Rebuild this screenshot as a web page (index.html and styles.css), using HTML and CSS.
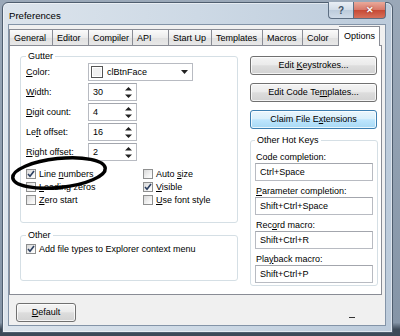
FILE: index.html
```html
<!DOCTYPE html>
<html>
<head>
<meta charset="utf-8">
<link rel="stylesheet" href="styles.css">
</head>
<body>
<div class="screen">
  <div class="window">
    <div class="titlebar">
      <span class="title">Preferences</span>
      <div class="caption">
        <div class="cbtn help">?</div>
        <div class="cbtn close">&#x2715;</div>
      </div>
    </div>
    <div class="client">
      <div class="tabs">
        <div class="tab">General</div>
        <div class="tab">Editor</div>
        <div class="tab">Compiler</div>
        <div class="tab">API</div>
        <div class="tab">Start Up</div>
        <div class="tab">Templates</div>
        <div class="tab">Macros</div>
        <div class="tab last">Color</div>
        <div class="tab sel">Options</div>
      </div>
      <div class="panel">
        <div class="left">
          <fieldset class="group gutter">
            <legend>Gutter</legend>
            <div class="fields">
              <span><u>C</u>olor:</span>
              <div class="combo"><span class="swatch"></span><span class="ctext">clBtnFace</span><svg class="darrow" width="7" height="4" viewBox="0 0 7 4"><path d="M0 0h7L3.5 4z" fill="#222"/></svg></div>
              <span><u>W</u>idth:</span>
              <div class="edit spin">30<svg class="arrows" width="7" height="11" viewBox="0 0 7 11"><path d="M3.5 0L7 3.5H0z M0 7.5h7L3.5 11z" fill="#222"/></svg></div>
              <span><u>D</u>igit count:</span>
              <div class="edit spin">4<svg class="arrows" width="7" height="11" viewBox="0 0 7 11"><path d="M3.5 0L7 3.5H0z M0 7.5h7L3.5 11z" fill="#222"/></svg></div>
              <span>Le<u>f</u>t offset:</span>
              <div class="edit spin">16<svg class="arrows" width="7" height="11" viewBox="0 0 7 11"><path d="M3.5 0L7 3.5H0z M0 7.5h7L3.5 11z" fill="#222"/></svg></div>
              <span><u>R</u>ight offset:</span>
              <div class="edit spin">2<svg class="arrows" width="7" height="11" viewBox="0 0 7 11"><path d="M3.5 0L7 3.5H0z M0 7.5h7L3.5 11z" fill="#222"/></svg></div>
            </div>
            <div class="checks">
              <label class="chk"><span class="cb on"><svg width="8" height="8" viewBox="0 0 8 8"><path d="M1 4l2 2.2L7 1" fill="none" stroke="#2b3f61" stroke-width="1.6"/></svg></span><span>Line <u>n</u>umbers</span></label>
              <label class="chk"><span class="cb"></span><span>Auto <u>s</u>ize</span></label>
              <label class="chk"><span class="cb"></span><span><u>L</u>eading zeros</span></label>
              <label class="chk"><span class="cb on"><svg width="8" height="8" viewBox="0 0 8 8"><path d="M1 4l2 2.2L7 1" fill="none" stroke="#2b3f61" stroke-width="1.6"/></svg></span><span><u>V</u>isible</span></label>
              <label class="chk"><span class="cb"></span><span><u>Z</u>ero start</span></label>
              <label class="chk"><span class="cb"></span><span><u>U</u>se font style</span></label>
            </div>
          </fieldset>
          <fieldset class="group other">
            <legend>Other</legend>
            <label class="chk"><span class="cb on"><svg width="8" height="8" viewBox="0 0 8 8"><path d="M1 4l2 2.2L7 1" fill="none" stroke="#2b3f61" stroke-width="1.6"/></svg></span><span>Add file types to Explorer context menu</span></label>
          </fieldset>
        </div>
        <div class="right">
          <button class="btn">Edit <u>K</u>eystrokes...</button>
          <button class="btn">Edit Code Te<u>m</u>plates...</button>
          <button class="btn hot">Claim File E<u>x</u>tensions</button>
          <fieldset class="group hotkeys">
            <legend>Other Hot Keys</legend>
            <div class="lbl">Code completion:</div>
            <div class="edit">Ctrl+Space</div>
            <div class="lbl"><u>P</u>arameter completion:</div>
            <div class="edit">Shift+Ctrl+Space</div>
            <div class="lbl">Rec<u>o</u>rd macro:</div>
            <div class="edit">Shift+Ctrl+R</div>
            <div class="lbl">Pla<u>y</u>back macro:</div>
            <div class="edit">Shift+Ctrl+P</div>
          </fieldset>
        </div>
      </div>
      <div class="footer">
        <button class="btn dflt"><u>D</u>efault</button>
        <span class="grip"></span>
      </div>
    </div>
  </div>
  <svg class="annot" width="400" height="336" viewBox="0 0 400 336"><ellipse cx="59" cy="173" rx="46.5" ry="14.5" transform="rotate(-6 59 173)" fill="none" stroke="#000" stroke-width="3.5"/></svg>
</div>
</body>
</html>
```

FILE: styles.css
```css
* { box-sizing: border-box; }
html, body { margin: 0; padding: 0; }
body {
  width: 400px;
  height: 336px;
  overflow: hidden;
  font-family: "Liberation Sans", Arial, sans-serif;
  font-size: 9px;
  color: #000;
}
.screen {
  position: relative;
  width: 400px;
  height: 336px;
  padding: 2px 0 0 2px;
  background: linear-gradient(to bottom, #9aa8b8 0%, #8595a7 96%, #3d4a58 98%);
}
.window {
  width: 391px;
  height: 331px;
  border: 1px solid #4f5e6f;
  border-radius: 6px 6px 0 0;
  background: linear-gradient(to right, #dce4ec 0%, #cdd9e5 50%, #bccbdb 100%);
  box-shadow: inset 0 0 0 1px rgba(255,255,255,0.5);
  display: flex;
  flex-direction: column;
  padding: 0 6px 6px 5px;
}
.titlebar {
  height: 21px;
  display: flex;
  justify-content: space-between;
  align-items: flex-start;
}
.title {
  padding: 7px 0 0 1px;
  font-size: 9.6px;
  line-height: 11px;
}
.caption { display: flex; margin-top: -1px; }
.cbtn {
  height: 17px;
  border: 1px solid #5d6e82;
  border-top: 0;
  display: flex;
  align-items: center;
  justify-content: center;
  font-weight: bold;
}
.help {
  width: 25px;
  border-radius: 0 0 0 4px;
  border-right: 0;
  background: linear-gradient(#e9eef4, #d3dde8 48%, #bccbdb 52%, #cfdbe8);
  color: #3f5266;
  font-size: 10px;
}
.close {
  width: 33px;
  border-radius: 0 0 4px 0;
  background: linear-gradient(#e9a99a, #d8796a 48%, #c74a35 52%, #d6705a);
  color: #fff;
  font-size: 9px;
  text-shadow: 0 0 2px #7a1e10;
}
.client {
  flex: 1;
  background: #f0f0f0;
  border: 1px solid #8394a8;
  display: flex;
  flex-direction: column;
}
.tabs {
  height: 20px;
  display: grid;
  grid-template-columns: 43px 36px 44px 36px 43px 51px 40px 37px 41px;
  align-items: end;
  position: relative;
  z-index: 1;
}
.tab {
  height: 16px;
  border: 1px solid #898c95;
  border-bottom: 0;
  border-right: 0;
  background: linear-gradient(#fbfbfb, #ececec 50%, #e0e0e0 52%, #e8e8e8);
  padding: 2px 0 0 4px;
  line-height: 12px;
  white-space: nowrap;
}
.tab.last { border-right: 1px solid #898c95; }
.tab.sel {
  height: 20px;
  margin-bottom: -1px;
  border: 1px solid #898c95;
  border-bottom: 0;
  border-left: 0;
  background: #fff;
  padding: 3px 0 0 5px;
}
.panel {
  width: 373px;
  height: 250px;
  border: 1px solid #898c95;
  background: #fff;
  display: flex;
  gap: 12px;
  padding: 4px 2px 0 10px;
}
.left { width: 218px; display: flex; flex-direction: column; }
.right { width: 128px; display: flex; flex-direction: column; padding-top: 6px; }
.group {
  margin: 0;
  border: 1px solid #d5dfe5;
  border-radius: 3px;
  min-width: 0;
}
.group legend {
  padding: 0 2px;
  line-height: 12px;
}
.gutter { padding: 1px 5px 16px; }
.fields {
  display: grid;
  grid-template-columns: 62px auto;
  grid-auto-rows: 18px;
  row-gap: 2px;
  align-items: center;
}
.fields > span { line-height: 12px; }
.edit {
  height: 18px;
  background: #fff;
  border: 1px solid #b8bbc2;
  border-top-color: #a3a6ad;
  padding: 0 0 0 4px;
  line-height: 16px;
}
.spin {
  width: 49px;
  display: flex;
  justify-content: space-between;
  align-items: center;
  padding-right: 4px;
}
.arrows { display: block; }
.combo {
  width: 105px;
  height: 18px;
  background: #fff;
  border: 1px solid #b8bbc2;
  display: flex;
  align-items: center;
  padding: 0 4px 0 2px;
}
.swatch {
  width: 12px;
  height: 12px;
  border: 1px solid #555;
  background: #f0f0f0;
  box-shadow: inset 0 0 0 1px #fff;
  margin-right: 4px;
}
.ctext { flex: 1; }
.darrow { display: block; }
.checks {
  display: grid;
  grid-template-columns: 117px auto;
  grid-auto-rows: 13px;
  margin-top: 6px;
}
.chk {
  display: flex;
  align-items: center;
  line-height: 12px;
  white-space: nowrap;
}
.cb {
  width: 10px;
  height: 10px;
  border: 1px solid #8e8f8f;
  background: linear-gradient(135deg, #d8d8d8, #f6f6f6 70%, #fff);
  margin-right: 3px;
  display: flex;
  align-items: center;
  justify-content: center;
  flex: none;
}
.other { margin-top: 6px; padding: 2px 5px 25px; }
.btn {
  font: inherit;
  color: #000;
  height: 19px;
  width: 127px;
  margin: 0 0 8px 0;
  padding: 0;
  border: 1px solid #707070;
  border-radius: 3px;
  background: linear-gradient(#f4f4f4, #ebebeb 45%, #dddddd 52%, #d2d2d2);
  box-shadow: inset 0 0 0 1px rgba(255,255,255,0.75);
  text-align: center;
  line-height: 17px;
}
.btn.hot {
  border-color: #3c7fb1;
  background: linear-gradient(#eaf6fd, #d9f0fc 45%, #bee6fd 52%, #a7d9f5);
}
.hotkeys { margin-top: -3px; padding: 5px 4px 2px; }
.hotkeys .lbl { line-height: 12px; height: 12px; padding-left: 1px; }
.hotkeys .edit { margin-bottom: 4px; }
.hotkeys .edit:last-child { margin-bottom: 0; }
.footer {
  flex: 1;
  position: relative;
  padding: 8px 0 0 7px;
}
.btn.dflt { width: 60px; margin: 0; }
.grip {
  position: absolute;
  right: 30px;
  bottom: 7px;
  width: 6px;
  height: 1px;
  background: #333;
}
.annot {
  position: absolute;
  left: 0;
  top: 0;
  pointer-events: none;
}
```
